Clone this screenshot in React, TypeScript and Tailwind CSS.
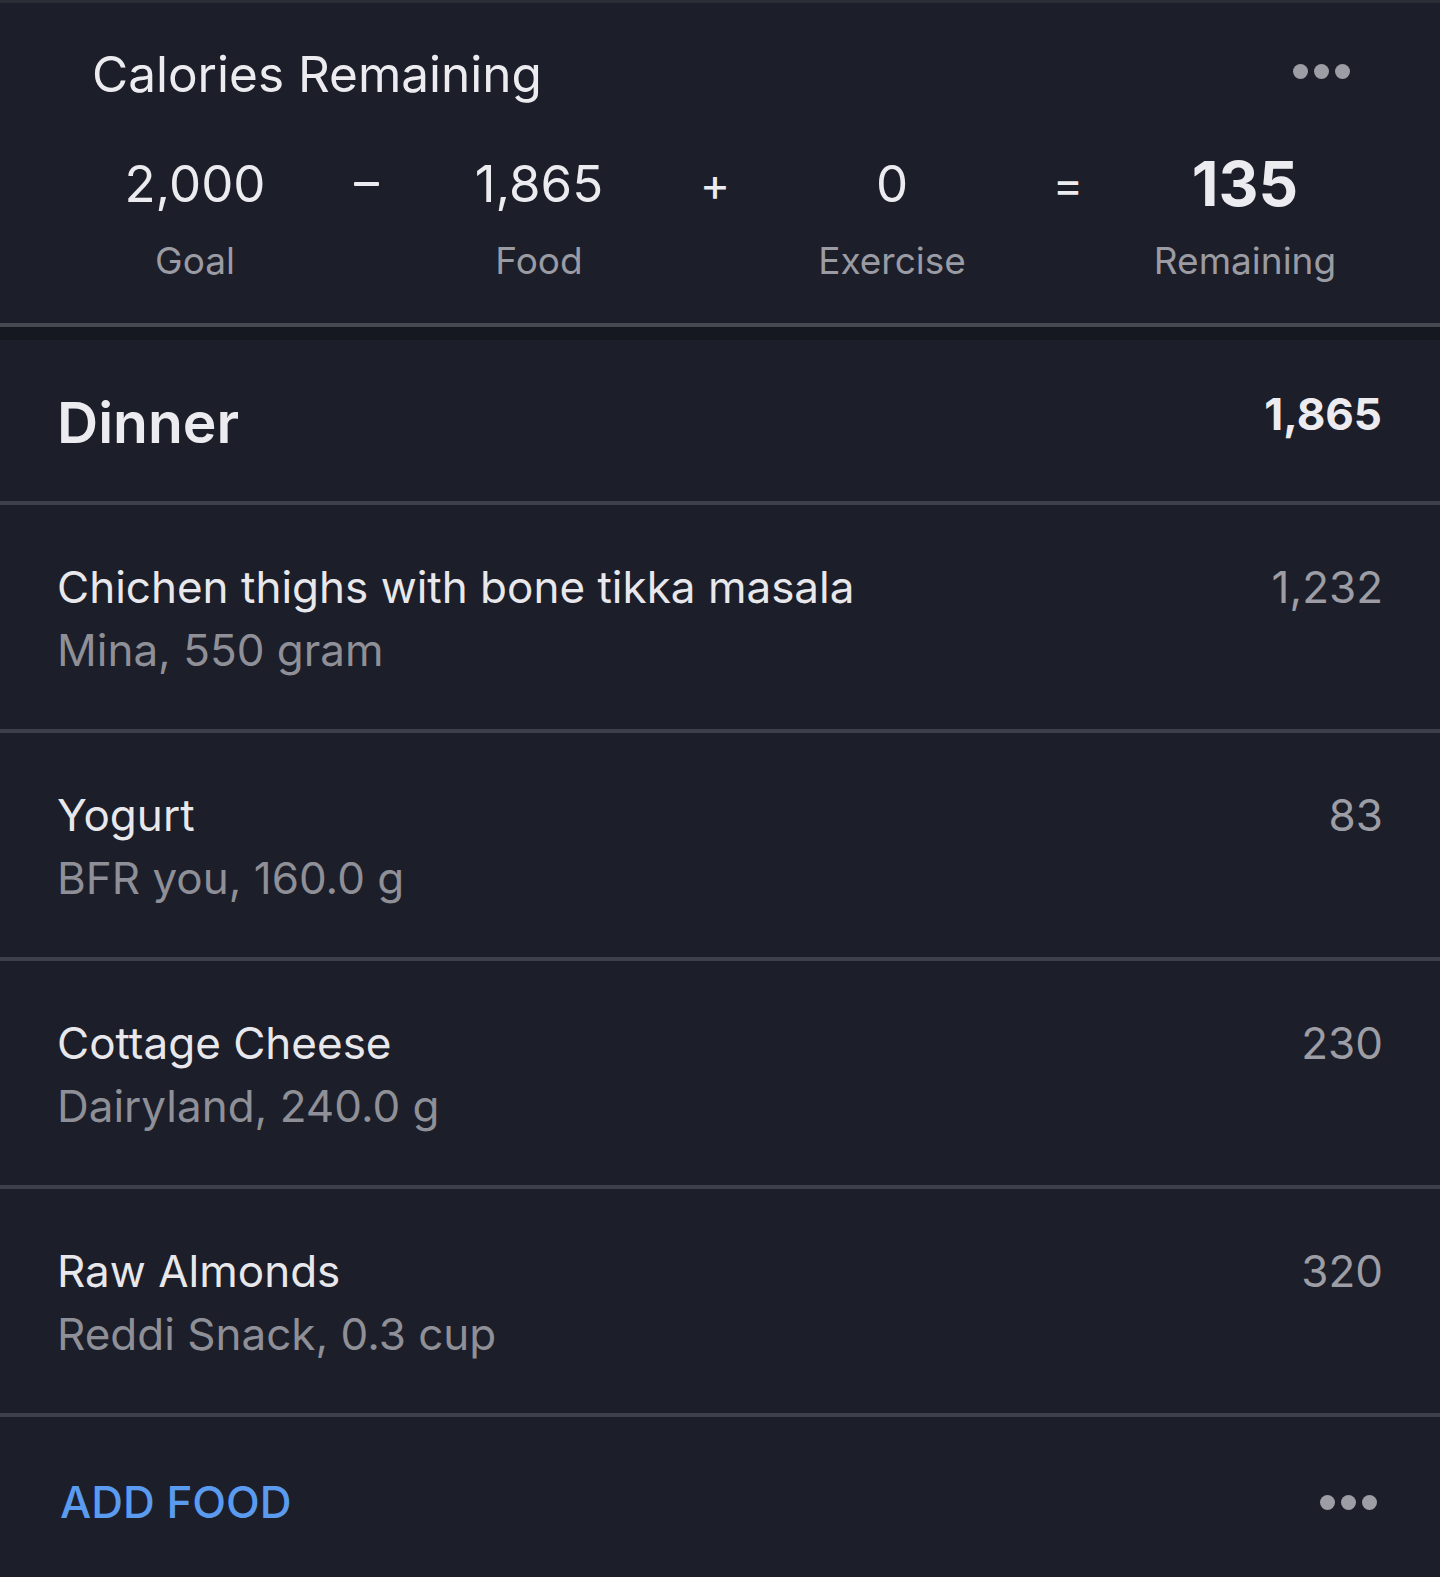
import React from 'react';

const items = [
  { name: 'Chichen thighs with bone tikka masala', detail: 'Mina, 550 gram', kcal: '1,232' },
  { name: 'Yogurt', detail: 'BFR you, 160.0 g', kcal: '83' },
  { name: 'Cottage Cheese', detail: 'Dairyland, 240.0 g', kcal: '230' },
  { name: 'Raw Almonds', detail: 'Reddi Snack, 0.3 cup', kcal: '320' },
];

function Dots() {
  return (
    <div className="flex gap-[6px]">
      <span className="w-[15px] h-[15px] rounded-full bg-[#9c9da5]"></span>
      <span className="w-[15px] h-[15px] rounded-full bg-[#9c9da5]"></span>
      <span className="w-[15px] h-[15px] rounded-full bg-[#9c9da5]"></span>
    </div>
  );
}

function Stat({ value, label, big }: { value: string; label: string; big?: boolean }) {
  return (
    <div className="flex flex-col items-center">
      <div
        className={
          big
            ? 'text-[62px] leading-[60px] font-bold text-[#ececf0]'
            : 'text-[51px] leading-[60px] text-[#ececf0]'
        }
      >
        {value}
      </div>
      <div className="mt-[25px] text-[37px] leading-[44px] text-[#9a9ba3]">{label}</div>
    </div>
  );
}

export default function App() {
  return (
    <div
      className="w-full min-h-[1577px] bg-[#1c1e29] text-white"
      style={{ fontFamily: 'Inter, "Noto Sans", sans-serif' }}
    >
      {/* Calories summary */}
      <div className="h-[3px] bg-[#2a2c36]"></div>
      <div className="h-[320px]">
        <div className="flex items-start justify-between pt-[41px] pl-[92px] pr-[90px]">
          <h1 className="text-[49.5px] leading-[60px] text-[#ececf0]">Calories Remaining</h1>
          <div className="pt-[20px]">
            <Dots />
          </div>
        </div>
        <div className="mt-[50px] ml-[108px] grid grid-cols-[174px_168px_178px_174px_180px_172px_182px] items-start">
          <Stat value="2,000" label="Goal" />
          <div className="h-[60px] flex items-center justify-center">
            <span className="block w-[25px] h-[4px] rounded-[1px] bg-[#ececf0]"></span>
          </div>
          <Stat value="1,865" label="Food" />
          <div className="h-[60px] flex items-center justify-center text-[46px] text-[#ececf0]">+</div>
          <Stat value="0" label="Exercise" />
          <div className="h-[60px] flex items-center justify-center text-[46px] text-[#ececf0]">=</div>
          <Stat value="135" label="Remaining" big />
        </div>
      </div>
      <div className="h-[4px] bg-[#464852]"></div>
      <div className="h-[13px] bg-[#161821]"></div>

      {/* Dinner */}
      <div className="h-[161px] flex items-start justify-between pt-[48px] pl-[57px] pr-[58px]">
        <h2 className="text-[57px] leading-[70px] font-semibold text-[#ececf0]">Dinner</h2>
        <div className="text-[44px] leading-[52px] font-bold text-[#ececf0]">1,865</div>
      </div>
      <div className="h-[4px] bg-[#3d3f4a]"></div>

      {items.map((item) => (
        <div key={item.name}>
          <div className="h-[224px] flex items-start justify-between pt-[56px] pl-[57px] pr-[57px]">
            <div>
              <div className="text-[44px] leading-[52px] text-[#e8e8ec]">{item.name}</div>
              <div className="mt-[11px] text-[44px] leading-[52px] text-[#8e8f97]">{item.detail}</div>
            </div>
            <div className="text-[44px] leading-[52px] text-[#9c9da5]">{item.kcal}</div>
          </div>
          <div className="h-[4px] bg-[#3d3f4a]"></div>
        </div>
      ))}

      {/* Footer */}
      <div className="flex items-center justify-between pt-[59px] pl-[60px] pr-[63px]">
        <button className="text-[44px] leading-[52px] font-medium text-[#5a9bef]">ADD FOOD</button>
        <Dots />
      </div>
    </div>
  );
}
